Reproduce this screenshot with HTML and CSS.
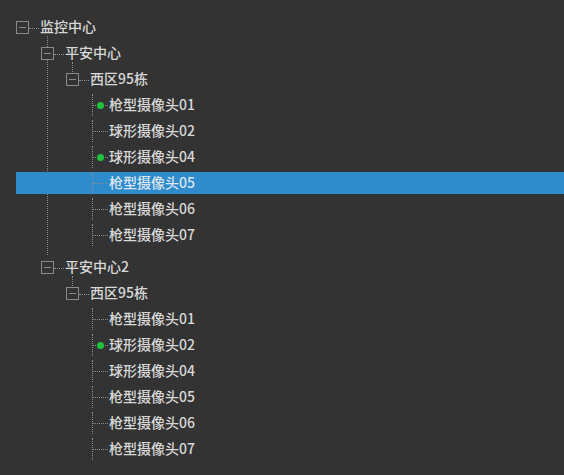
FILE: index.html
```html
<!DOCTYPE html>
<html lang="zh-CN">
<head>
<meta charset="utf-8">
<title>监控中心</title>
<link rel="stylesheet" href="styles.css">
</head>
<body>
<ul class="tree">
  <li class="node">
    <div class="row"><span class="sw"></span><span class="hl"></span><span class="label">监控中心</span></div>
    <ul class="children">
      <li class="node parent first">
        <div class="row"><span class="sw"></span><span class="hl"></span><span class="label">平安中心</span></div>
        <ul class="children">
          <li class="node parent first only">
            <div class="row"><span class="sw"></span><span class="hl"></span><span class="label">西区95栋</span></div>
            <ul class="children">
              <li class="leaf"><div class="row"><span class="lsw"><span class="dot"></span></span><span class="label">枪型摄像头01</span></div></li>
              <li class="leaf"><div class="row"><span class="lsw"></span><span class="label">球形摄像头02</span></div></li>
              <li class="leaf"><div class="row"><span class="lsw"><span class="dot"></span></span><span class="label">球形摄像头04</span></div></li>
              <li class="leaf"><div class="row selected"><span class="lsw"></span><span class="label">枪型摄像头05</span></div></li>
              <li class="leaf"><div class="row"><span class="lsw"></span><span class="label">枪型摄像头06</span></div></li>
              <li class="leaf"><div class="row"><span class="lsw"></span><span class="label">枪型摄像头07</span></div></li>
            </ul>
          </li>
        </ul>
      </li>
      <li class="node parent spaced">
        <div class="row"><span class="sw"></span><span class="hl"></span><span class="label">平安中心2</span></div>
        <ul class="children">
          <li class="node parent first only">
            <div class="row"><span class="sw"></span><span class="hl"></span><span class="label">西区95栋</span></div>
            <ul class="children">
              <li class="leaf"><div class="row"><span class="lsw"></span><span class="label">枪型摄像头01</span></div></li>
              <li class="leaf"><div class="row"><span class="lsw"><span class="dot"></span></span><span class="label">球形摄像头02</span></div></li>
              <li class="leaf"><div class="row"><span class="lsw"></span><span class="label">球形摄像头04</span></div></li>
              <li class="leaf"><div class="row"><span class="lsw"></span><span class="label">枪型摄像头05</span></div></li>
              <li class="leaf"><div class="row"><span class="lsw"></span><span class="label">枪型摄像头06</span></div></li>
              <li class="leaf"><div class="row"><span class="lsw"></span><span class="label">枪型摄像头07</span></div></li>
            </ul>
          </li>
        </ul>
      </li>
    </ul>
  </li>
</ul>
</body>
</html>
```

FILE: styles.css
```css
html, body {
  margin: 0;
  padding: 0;
  background: #333333;
  height: 100%;
}

body {
  font-family: "Noto Sans CJK SC", "Noto Sans", sans-serif;
  font-size: 14px;
  font-weight: 500;
  color: #d8d8d8;
  overflow: hidden;
}

.tree {
  list-style: none;
  margin: 0;
  padding: 16px 0 0 16px;
}

.children {
  list-style: none;
  margin: 0 0 0 25px;
  padding: 0;
}

.node,
.leaf {
  position: relative;
}

.row {
  display: flex;
  align-items: flex-start;
  height: 22px;
  margin-top: 4px;
}

.tree > .node > .row {
  margin-top: 0;
}

.spaced > .row {
  margin-top: 10px;
}

.sw {
  position: relative;
  z-index: 1;
  box-sizing: border-box;
  width: 13px;
  height: 13px;
  margin-top: 5px;
  border: 1px solid #8a8a8a;
  background: #333333;
  flex: none;
}

.sw::after {
  content: "";
  position: absolute;
  left: 2px;
  top: 5px;
  width: 7px;
  height: 1px;
  background: #8a8a8a;
}

.hl {
  flex: none;
  width: 10px;
  margin-top: 12px;
  border-top: 1px dotted #8c8c8c;
}

.label {
  margin-left: 1px;
  line-height: 21px;
  white-space: nowrap;
}

/* connector lines between parent nodes */
.parent::before {
  content: "";
  position: absolute;
  left: 6px;
  top: -6px;
  border-left: 1px dotted #8c8c8c;
}

.parent.first::before {
  bottom: -9px;
}

.parent.only::before {
  bottom: auto;
  height: 10px;
}

.parent.spaced::before {
  display: none;
}

/* leaf switch with vertical + horizontal dotted lines */
.lsw {
  position: relative;
  flex: none;
  width: 18px;
  height: 22px;
}

.lsw::before {
  content: "";
  position: absolute;
  left: 1px;
  top: 0;
  height: 22px;
  border-left: 1px dotted #8c8c8c;
}

.lsw::after {
  content: "";
  position: absolute;
  left: 2px;
  top: 11px;
  width: 15px;
  border-top: 1px dotted #8c8c8c;
}

.dot {
  position: absolute;
  z-index: 1;
  left: 6px;
  top: 8px;
  width: 7px;
  height: 7px;
  border-radius: 50%;
  background: #22c33c;
}

.leaf .label {
  margin-left: 0;
}

.selected {
  margin-left: -75px;
  padding-left: 75px;
  background: #2e8bcc;
}

.selected .label {
  color: #dde6ee;
}
```
